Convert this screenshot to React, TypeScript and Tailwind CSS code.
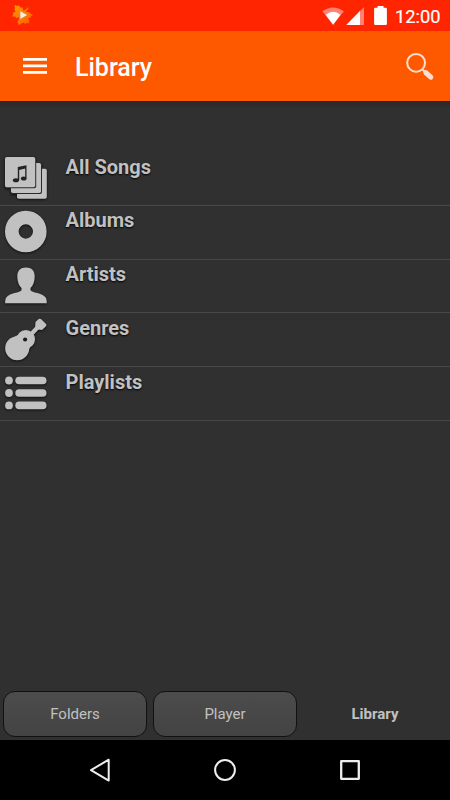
import React from 'react';

interface LibraryItem {
  label: string;
  icon: React.ReactNode;
}

const items: LibraryItem[] = [
  {
    label: 'All Songs',
    icon: (
      <>
        <rect x="17" y="16.8" width="29.8" height="30" rx="1.8" />
        <rect x="10.500" y="10.500" width="31.500" height="31.500" rx="2" fill="#2b2b2b" />
        <rect x="11" y="11" width="30" height="30" rx="1.8" />
        <rect x="4.500" y="4.500" width="31.700" height="31.700" rx="2" fill="#2b2b2b" />
        <rect x="5" y="5" width="30.200" height="30.200" rx="1.8" />
        <path d="M17.800 15.100l8.700-1.800v13.200h-1.300V16.600L19.200 17.900v10.600h-1.400z" fill="#222" />
        <ellipse cx="15.900" cy="28.200" rx="3" ry="2" fill="#222" />
        <ellipse cx="23.700" cy="26.400" rx="2.800" ry="2" fill="#222" />
      </>
    ),
  },
  {
    label: 'Albums',
    icon: <circle cx="25.8" cy="25.5" r="14" fill="none" stroke="#c1c1c1" strokeWidth="13.6" />,
  },
  {
    label: 'Artists',
    icon: (
      <path d="M26 7.4c5.4 0 8.7 3.3 8.7 8.8 0 5.3-1.6 9.4-4.2 11.8v2.2c1 2.3 12.1 2.8 15.1 7.3.8 1.2 1.2 3.2 1.2 5.8H5.1c0-2.6.4-4.6 1.2-5.8 3-4.5 14.2-5 15.2-7.3V28c-2.6-2.4-4.2-6.5-4.2-11.8 0-5.500 3.300-8.800 8.700-8.800z" />
    ),
  },
  {
    label: 'Genres',
    icon: (
      <>
        <circle cx="17.200" cy="35.200" r="12" />
        <circle cx="25.800" cy="26.300" r="9.200" />
        <path d="M15 23.500l3-1.500 12 12-1.500 4z" />
        <path d="M29 23.500l8.500-9" stroke="#c1c1c1" strokeWidth="4.200" />
        <path d="M35.200 13.600l.3-4.600 3.500-3.300 1.900.3 5.400 5.300-.1 1.700-4.200 4-4-.4z" />
        <circle cx="25.100" cy="26.500" r="2.100" fill="#1c1c1c" />
      </>
    ),
  },
  {
    label: 'Playlists',
    icon: (
      <>
        {[13.5, 26, 38.4].map((y) => (
          <g key={y}>
            <circle cx="9" cy={y} r="3.9" />
            <rect x="15.3" y={y - 3.8} width="31.2" height="7.6" rx="3.8" />
          </g>
        ))}
      </>
    ),
  },
];

const StatusBar = () => (
  <div className="h-[31px] bg-[#ff2500] flex items-center text-white">
    <svg width="450" height="31" viewBox="0 0 450 31">
      <defs>
        <linearGradient id="leaf" x1="0" y1="0" x2="1" y2="1">
          <stop offset="0" stopColor="#ff9a00" />
          <stop offset="1" stopColor="#ff5a00" />
        </linearGradient>
      </defs>
      <path
        d="M15.500 5l1.500 1 2-.4 1.500 2.200 1.700-.5 1.500 3.700L28 7.400l.8.6-3 4 3.700.3.500 1 3 1.700-2.300 1.200.2 1.200-3 .8 1.500 1.800-.4 3.400-2-.6-1.500 1.300-2-1.500-2.300 1-2.300 1.800-.6-2.200-1.300-1 1.600-2.200.5-2.700-3.100.7-.8-1.400-3.200-.2 1.400-2.300-.7-1 3-1.500-1.200-1.500.4-2-.5-2.100z"
        fill="url(#leaf)"
      />
      <path d="M20.300 11.300l6.800 3.800-6.800 4z" fill="#f0f0f0" />
      <path d="M322.3 11.3Q333 3.5 343.9 11.3L333.1 24.7z" fill="#ff8173" />
      <path d="M325.7 14.7q7.4-5.9 14.8 0l-7.4 10z" fill="#fff" />
      <path d="M346.3 25L364 7v18z" fill="#ff8173" />
      <path d="M346.3 25L360 11v14z" fill="#fff" />
      <path d="M377.5 6h6v1.8h2.2q1.2 0 1.2 1.2v14.8q0 1.2-1.2 1.2h-10.4q-1.2 0-1.2-1.2V9q0-1.2 1.2-1.2h2.2z" fill="#fff" />
      <text x="395" y="23" fontSize="18" fontWeight="400" fill="#fff" stroke="#fff" strokeWidth="0.2" textLength="45.5" lengthAdjust="spacingAndGlyphs">
        12:00
      </text>
    </svg>
  </div>
);

const Toolbar = () => (
  <header className="h-[70px] bg-[#ff5900] flex items-center pl-[23px] pr-[15px] text-white">
    <button aria-label="Menu">
      <svg width="24" height="18" viewBox="0 0 24 18" fill="#fff">
        <path d="M0 1h24v2.7H0zM0 7.500h24v2.700H0zM0 14h24v2.700H0z" />
      </svg>
    </button>
    <h1 className="ml-7 flex-1 text-[25px] leading-[30px] font-medium pt-[3px]">Library</h1>
    <button aria-label="Search" className="pt-0.5">
      <svg width="30" height="30" viewBox="0 0 30 30" fill="none" stroke="#ffded0">
        <circle cx="11.1" cy="10.8" r="8.9" strokeWidth="2" />
        <path d="M17.3 17.2l3 3" strokeWidth="2" />
        <path d="M20.800 20.600l5 4.600" strokeWidth="5" strokeLinecap="round" />
      </svg>
    </button>
  </header>
);

const LibraryRow = ({ label, icon }: LibraryItem) => (
  <li className="h-[53.75px] flex border-b border-[#484848]">
    <svg
      width="50"
      height="53"
      viewBox="0 0 50 53"
      fill="#c1c1c1"
      className="shrink-0 drop-shadow-[0_1px_1px_rgba(0,0,0,0.7)]"
    >
      {icon}
    </svg>
    <span className="ml-[15.5px] pt-[2.5px] text-[20px] leading-6 font-bold text-[#c1c1c1] [text-shadow:0_1px_2px_#000]">
      {label}
    </span>
  </li>
);

const BottomTabs = () => (
  <div className="flex h-[49px] pb-[3px] text-[15px] text-[#c1c1c1] [text-shadow:0_1px_1px_#111]">
    {['Folders', 'Player'].map((tab) => (
      <button
        key={tab}
        className="mx-[3px] w-36 rounded-[12px] border border-[#111] bg-linear-to-b from-[#4c4c4c] to-[#434343] pt-px"
      >
        {tab}
      </button>
    ))}
    <button className="flex-1 font-bold pt-px">Library</button>
  </div>
);

const NavigationBar = () => (
  <nav className="h-[60px] bg-black flex items-center justify-center gap-[95px]">
    <svg width="30" height="30" viewBox="0 0 30 30" fill="none" stroke="#eee" strokeWidth="2" strokeLinejoin="round">
      <path d="M23.7 4.7v20.9L6 15.1z" />
    </svg>
    <svg width="30" height="30" viewBox="0 0 30 30" fill="none" stroke="#eee" strokeWidth="2">
      <circle cx="15" cy="15" r="9.9" />
    </svg>
    <svg width="30" height="30" viewBox="0 0 30 30" fill="none" stroke="#eee" strokeWidth="2.3" strokeLinejoin="round">
      <rect x="6.2" y="6.2" width="17.6" height="17.6" />
    </svg>
  </nav>
);

export default function App() {
  return (
    <div className="w-[450px] h-[800px] overflow-hidden flex flex-col bg-[#303030] font-[Roboto,sans-serif]">
      <StatusBar />
      <Toolbar />
      <main className="flex-1 pt-[51px] bg-linear-to-b from-[#282828] to-[#303030] to-[8px]">
        <ul>
          {items.map((item) => (
            <LibraryRow key={item.label} {...item} />
          ))}
        </ul>
      </main>
      <BottomTabs />
      <NavigationBar />
    </div>
  );
}
